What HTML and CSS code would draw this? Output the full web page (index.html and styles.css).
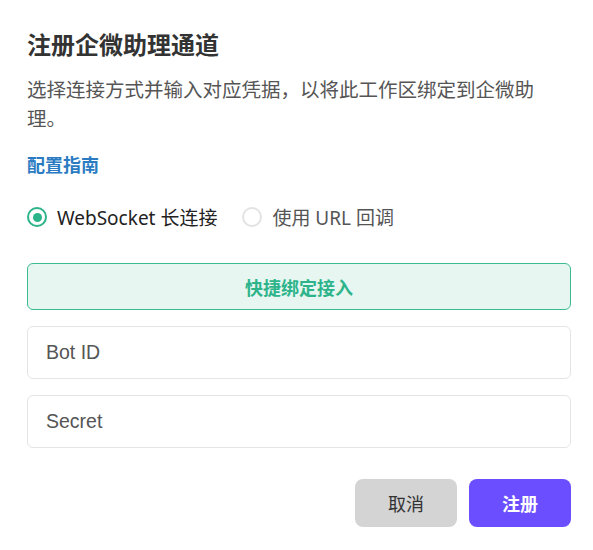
FILE: index.html
```html
<!DOCTYPE html>
<html lang="zh-CN">
<head>
<meta charset="utf-8">
<title>注册企微助理通道</title>
<link rel="stylesheet" href="styles.css">
</head>
<body>
<div class="dialog">
  <h1 class="title">注册企微助理通道</h1>
  <p class="desc">选择连接方式并输入对应凭据，以将此工作区绑定到企微助理。</p>
  <a class="guide" href="#">配置指南</a>
  <div class="modes">
    <label class="mode active"><span class="radio checked"></span><span>WebSocket 长连接</span></label>
    <label class="mode"><span class="radio"></span><span>使用 URL 回调</span></label>
  </div>
  <button class="quick">快捷绑定接入</button>
  <input class="field" type="text" placeholder="Bot ID">
  <input class="field" type="text" placeholder="Secret">
  <div class="actions">
    <button class="btn cancel">取消</button>
    <button class="btn primary">注册</button>
  </div>
</div>
</body>
</html>
```
FILE: styles.css
```css
html, body {
  margin: 0;
  padding: 0;
  background: #ffffff;
}
body {
  font-family: "Noto Sans", "Noto Sans CJK SC", sans-serif;
}
.dialog {
  width: 593px;
  box-sizing: border-box;
  padding: 28px 22px 0 27px;
  display: flex;
  flex-direction: column;
}
.title {
  margin: 0;
  font-size: 24px;
  line-height: 32px;
  font-weight: 700;
  color: #333333;
  font-family: "Noto Sans CJK SC", sans-serif;
}
.desc {
  margin: 14px 0 0;
  max-width: 515px;
  font-size: 19.5px;
  line-height: 29px;
  color: #555555;
  font-family: "Noto Sans CJK SC", sans-serif;
}
.guide {
  margin-top: 20px;
  align-self: flex-start;
  font-size: 18px;
  line-height: 24px;
  font-weight: 700;
  color: #2a7bc2;
  text-decoration: none;
  font-family: "Noto Sans CJK SC", sans-serif;
}
.modes {
  margin-top: 27px;
  height: 28px;
  display: flex;
  align-items: center;
  gap: 25px;
}
.mode {
  display: flex;
  align-items: center;
  gap: 10px;
  font-size: 19px;
  color: #555555;
}
.mode.active {
  color: #222222;
}
.radio {
  width: 20px;
  height: 20px;
  box-sizing: border-box;
  border-radius: 50%;
  border: 2.5px solid #e3e3e3;
  display: flex;
  align-items: center;
  justify-content: center;
}
.radio.checked {
  border-color: #2bb389;
}
.radio.checked::after {
  content: "";
  width: 9px;
  height: 9px;
  border-radius: 50%;
  background: #2bb389;
}
.quick {
  margin-top: 32px;
  height: 47px;
  border: 1px solid #3cbb93;
  border-radius: 6px;
  background: #e7f6f1;
  color: #2eb48b;
  font-size: 18px;
  font-weight: 700;
  font-family: "Noto Sans CJK SC", sans-serif;
}
.field {
  margin-top: 16px;
  height: 53px;
  box-sizing: border-box;
  border: 1px solid #e4e4e4;
  border-radius: 6px;
  padding: 0 18px;
  font-size: 19.5px;
  font-family: "Liberation Sans", sans-serif;
  color: #333;
  outline: none;
}
.field::placeholder {
  color: #555555;
}
.actions {
  margin-top: 31px;
  display: flex;
  justify-content: flex-end;
  gap: 12px;
}
.btn {
  width: 102px;
  height: 48px;
  border: none;
  border-radius: 8px;
  font-size: 18px;
  font-family: "Noto Sans CJK SC", sans-serif;
}
.cancel {
  background: #d4d4d4;
  color: #333333;
}
.primary {
  background: #6b4eff;
  color: #ffffff;
  font-weight: 700;
}
```
